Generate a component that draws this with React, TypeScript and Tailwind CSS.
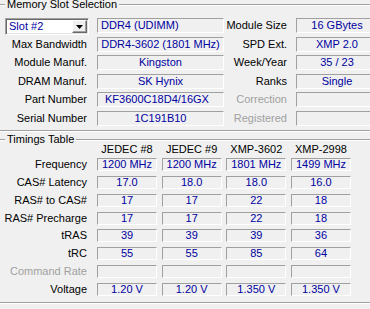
import React from 'react'

const sunken = 'border border-t-[#a0a0a0] border-l-[#a0a0a0] border-b-white border-r-white'
const valueText = 'text-[#0000a0] whitespace-nowrap leading-[13px]'

function GroupTitle({ title }: { title: string }) {
  return (
    <div className="flex items-start h-[13px]">
      <div className="mt-[6px] w-[5px] h-[2px] border-t border-b border-t-[#a0a0a0] border-b-white" />
      <span className="px-[2px] leading-[13px] text-black whitespace-nowrap">{title}</span>
      <div className="mt-[6px] flex-1 h-[2px] border-t border-b border-t-[#a0a0a0] border-b-white" />
    </div>
  )
}

function Field({ value, align = 'center', className = '' }: { value: string; align?: 'left' | 'center'; className?: string }) {
  return (
    <div
      className={`h-full flex items-center overflow-hidden ${sunken} ${valueText} ${
        align === 'center' ? 'justify-center' : 'justify-start'
      } ${className}`}
    >
      {value}
    </div>
  )
}

function Label({ text, disabled, className = '' }: { text: string; disabled?: boolean; className?: string }) {
  return (
    <div className={`shrink-0 text-right whitespace-nowrap leading-[13px] ${disabled ? 'text-[#a0a0a0]' : 'text-black'} ${className}`}>
      {text}
    </div>
  )
}

function SlotSelect() {
  return (
    <div className="self-start ml-[5px] w-[84px] h-[17px] flex bg-white border border-t-[#a0a0a0] border-l-[#a0a0a0] border-b-white border-r-white shadow-[inset_1px_1px_0_#696969,inset_-1px_-1px_0_#e3e3e3] p-[1px]">
      <div className={`flex-1 pl-[2px] flex items-center ${valueText}`}>Slot #2</div>
      <div className="w-[15px] h-full flex items-center justify-center bg-[#f0f0f0] border border-t-white border-l-white border-b-[#696969] border-r-[#696969] shadow-[inset_-1px_-1px_0_#a0a0a0]">
        <svg width="7" height="4" viewBox="0 0 7 4">
          <path d="M0 0h7L3.5 4z" fill="#000" />
        </svg>
      </div>
    </div>
  )
}

const slotRows = [
  { label: 'Max Bandwidth', value: 'DDR4-3602 (1801 MHz)', align: 'center', rLabel: 'SPD Ext.', rValue: 'XMP 2.0' },
  { label: 'Module Manuf.', value: 'Kingston', align: 'center', rLabel: 'Week/Year', rValue: '35 / 23' },
  { label: 'DRAM Manuf.', value: 'SK Hynix', align: 'center', rLabel: 'Ranks', rValue: 'Single' },
  { label: 'Part Number', value: 'KF3600C18D4/16GX', align: 'left', rLabel: 'Correction', rValue: '', rDisabled: true },
  { label: 'Serial Number', value: '1C191B10', align: 'center', rLabel: 'Registered', rValue: '', rDisabled: true },
] as const

const timingCols = ['JEDEC #8', 'JEDEC #9', 'XMP-3602', 'XMP-2998']

const timingRows: { label: string; values: string[]; disabled?: boolean }[] = [
  { label: 'Frequency', values: ['1200 MHz', '1200 MHz', '1801 MHz', '1499 MHz'] },
  { label: 'CAS# Latency', values: ['17.0', '18.0', '18.0', '16.0'] },
  { label: 'RAS# to CAS#', values: ['17', '17', '22', '18'] },
  { label: 'RAS# Precharge', values: ['17', '17', '22', '18'] },
  { label: 'tRAS', values: ['39', '39', '39', '36'] },
  { label: 'tRC', values: ['55', '55', '85', '64'] },
  { label: 'Command Rate', values: ['', '', '', ''], disabled: true },
  { label: 'Voltage', values: ['1.20 V', '1.20 V', '1.350 V', '1.350 V'] },
]

export default function App() {
  return (
    <div className="w-[370px] h-[309px] overflow-hidden bg-[#f0f0f0] text-[11px] font-['Liberation_Sans',Arial,sans-serif]">
      <div className="w-[400px] flex flex-col">
        {/* memory slot selection */}
        <div className="-mt-[2px]">
          <GroupTitle title="Memory Slot Selection" />
        </div>
        <div className="mt-[7.3px] flex flex-col gap-[3.5px]">
          <div className="flex h-[15px]">
            <SlotSelect />
            <Field value="DDR4 (UDIMM)" align="left" className="ml-[8px] w-[127px] pl-[3px]" />
            <Label text="Module Size" className="w-[63px] self-center" />
            <Field value="16 GBytes" className="ml-[9px] w-[82px]" />
          </div>
          {slotRows.map((r) => (
            <div key={r.label} className="flex items-center h-[15px]">
              <Label text={r.label} className="w-[87px]" />
              <Field
                value={r.value}
                align={r.align}
                className={`ml-[10px] w-[127px] ${r.align === 'left' ? 'pl-[7px]' : ''}`}
              />
              <Label text={r.rLabel} disabled={'rDisabled' in r} className="w-[63px]" />
              <Field value={r.rValue} className="ml-[9px] w-[82px]" />
            </div>
          ))}
        </div>
        <div className="mt-[4.2px] h-[2px] border-t border-b border-t-[#a0a0a0] border-b-white" />

        {/* timings table */}
        <div className="mt-[1px]">
          <GroupTitle title="Timings Table" />
        </div>
        <div className="-mt-[3px] flex h-[13px] leading-[13px]">
          <div className="w-[97px] shrink-0" />
          <div className="flex gap-[4.67px]">
            {timingCols.map((c) => (
              <div key={c} className="w-[60px] text-center text-black whitespace-nowrap">
                {c}
              </div>
            ))}
          </div>
        </div>
        <div className="mt-[2.3px] flex flex-col gap-[4.77px]">
          {timingRows.map((r) => (
            <div key={r.label} className="flex items-center h-[13px]">
              <Label text={r.label} disabled={r.disabled} className="w-[87px]" />
              <div className="ml-[10px] h-full flex gap-[4.67px]">
                {r.values.map((v, i) => (
                  <Field key={i} value={v} className="w-[60px]" />
                ))}
              </div>
            </div>
          ))}
        </div>
        <div className="mt-[6px] h-[2px] border-t border-b border-t-[#a0a0a0] border-b-white" />
      </div>
    </div>
  )
}
